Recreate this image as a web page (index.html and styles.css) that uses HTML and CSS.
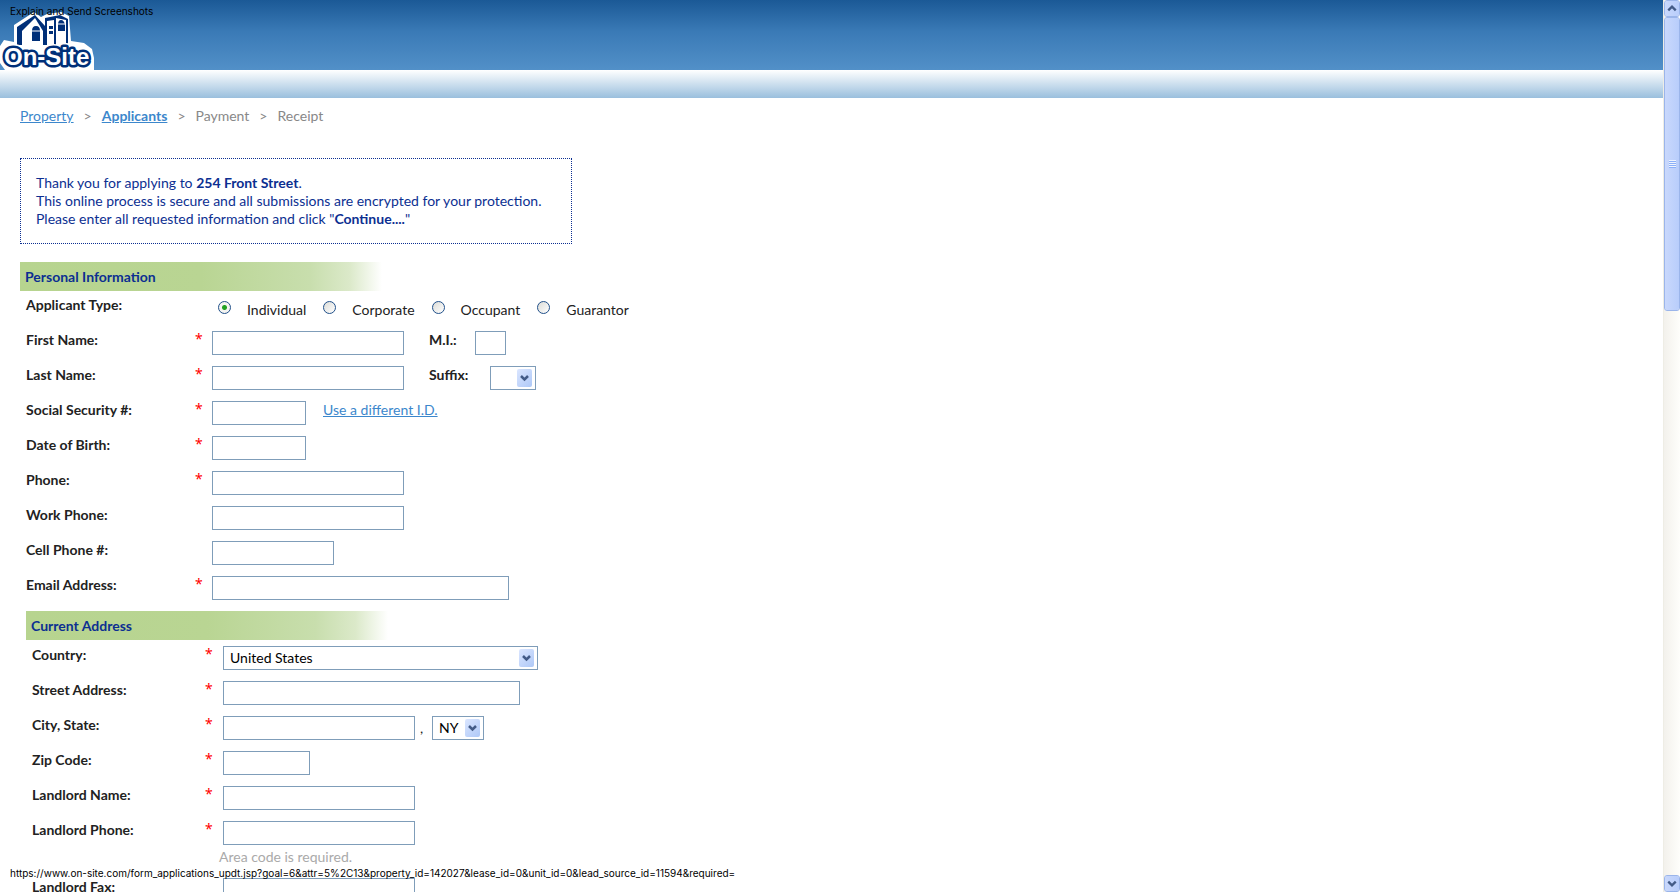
FILE: index.html
```html
<!DOCTYPE html>
<html lang="en">
<head>
<meta charset="utf-8">
<title>On-Site Application</title>
<link rel="stylesheet" href="styles.css">
</head>
<body>
<div class="page">
  <header class="banner">
    <svg class="logo" width="94" height="70" viewBox="0 0 94 70" role="img" aria-label="On-Site">
      <path fill="#fff" d="M14 42V25L34 12 41 17 47 14 61 12 69 16 71 41 84 43 92 49 94 58V70H5L0 63V46L4 40Z"/>
      <path fill="#002f78" d="M17 27 35 15 45 26V18L60 15 68 19V45H17Z"/>
      <path fill="#fff" d="M22 31 35 18 43 31V45H22Z"/>
      <path fill="#fff" d="M47 21 54 20V45H47ZM56 18 66 20V45H56Z"/>
      <path fill="#002f78" d="M32 31Q32 26 36 26T40 31V41H32ZM49 26H53V29H49ZM49 31H53V34H49ZM58 25Q58 20 61 20T65 25V31H58Z"/>
      <path stroke="#fff" d="M32 31H40M58 24H65"/>
      <text class="logo-halo" x="4" y="65">On-Site</text>
      <text class="logo-text" x="4" y="65">On-Site</text>
    </svg>
  </header>
  <div class="subbanner"></div>
  <nav class="crumbs" aria-label="Progress">
    <a href="#">Property</a><span>&gt;</span><a class="current" href="#">Applicants</a><span>&gt;</span><span>Payment</span><span>&gt;</span><span>Receipt</span>
  </nav>
  <form class="content">
    <p class="notice">Thank you for applying to <b>254 Front Street</b>.<br>This online process is secure and all submissions are encrypted for your protection.<br>Please enter all requested information and click "<b>Continue....</b>"</p>

    <section class="section">
      <h2>Personal Information</h2>
      <div class="row" role="radiogroup" aria-labelledby="type">
        <span class="label" id="type">Applicant Type:</span><span class="star"></span>
        <div class="radios">
          <label><input type="radio" name="type" checked><span>Individual</span></label>
          <label><input type="radio" name="type"><span>Corporate</span></label>
          <label><input type="radio" name="type"><span>Occupant</span></label>
          <label><input type="radio" name="type"><span>Guarantor</span></label>
        </div>
      </div>
      <div class="row"><label class="label" for="first">First Name:</label><span class="star">*</span><input id="first" class="field w-name"><label class="side mi" for="mi">M.I.:</label><input id="mi" class="field w-mi"></div>
      <div class="row"><label class="label" for="last">Last Name:</label><span class="star">*</span><input id="last" class="field w-name"><label class="side suffix" for="suffix">Suffix:</label><span class="select w-suffix"><select id="suffix"><option></option><option>Jr.</option></select><svg viewBox="0 0 15 18"><path d="M4 7l3.500 3.500L11 7"/></svg></span></div>
      <div class="row"><label class="label" for="ssn">Social Security #:</label><span class="star">*</span><input id="ssn" class="field w-short"><a class="alt-id" href="#">Use a different I.D.</a></div>
      <div class="row"><label class="label" for="dob">Date of Birth:</label><span class="star">*</span><input id="dob" class="field w-short"></div>
      <div class="row"><label class="label" for="phone">Phone:</label><span class="star">*</span><input id="phone" class="field w-name"></div>
      <div class="row"><label class="label" for="work">Work Phone:</label><span class="star"></span><input id="work" class="field w-name"></div>
      <div class="row"><label class="label" for="cell">Cell Phone #:</label><span class="star"></span><input id="cell" class="field w-cell"></div>
      <div class="row"><label class="label" for="email">Email Address:</label><span class="star">*</span><input id="email" class="field w-long"></div>
    </section>

    <section class="section nested">
      <h2>Current Address</h2>
      <div class="row"><label class="label" for="country">Country:</label><span class="star">*</span><span class="select w-country"><select id="country"><option>United States</option></select><svg viewBox="0 0 15 18"><path d="M4 7l3.500 3.500L11 7"/></svg></span></div>
      <div class="row"><label class="label" for="street">Street Address:</label><span class="star">*</span><input id="street" class="field w-long"></div>
      <div class="row"><label class="label" for="city">City, State:</label><span class="star">*</span><input id="city" class="field w-name"><span class="comma">,</span><span class="select w-state"><select id="state" aria-label="State"><option>NY</option></select><svg viewBox="0 0 15 18"><path d="M4 7l3.500 3.500L11 7"/></svg></span></div>
      <div class="row"><label class="label" for="zip">Zip Code:</label><span class="star">*</span><input id="zip" class="field w-zip"></div>
      <div class="row"><label class="label" for="lname">Landlord Name:</label><span class="star">*</span><input id="lname" class="field w-name"></div>
      <div class="row"><label class="label" for="lphone">Landlord Phone:</label><span class="star">*</span><input id="lphone" class="field w-name"></div>
      <p class="hint">Area code is required.</p>
      <div class="row"><label class="label" for="lfax">Landlord Fax:</label><span class="star"></span><input id="lfax" class="field w-name"></div>
    </section>
  </form>
</div>
<div class="scrollbar" aria-hidden="true">
  <span class="sb-button"><svg viewBox="0 0 15 15"><path d="M3.500 9.500l4-4 4 4"/></svg></span>
  <span class="sb-thumb"><i></i></span>
  <span class="sb-button sb-down"><svg viewBox="0 0 15 15"><path d="M3.500 5.500l4 4 4-4"/></svg></span>
</div>
<div class="overlay overlay-top">Explain and Send Screenshots</div>
<div class="overlay overlay-bottom">https://www.on-site.com/form_applications_updt.jsp?goal=6&amp;attr=5%2C13&amp;property_id=142027&amp;lease_id=0&amp;unit_id=0&amp;lead_source_id=11594&amp;required=</div>
</body>
</html>
```
FILE: styles.css
```css
* { box-sizing: border-box; }
body {
  margin: 0;
  height: 100vh;
  overflow: hidden;
  display: flex;
  position: relative;
  background: #fff;
  color: #222;
  font: 14px/18px Lato, "Open Sans", sans-serif;
}
.page { flex: 1; min-width: 0; overflow: hidden; }
.banner { height: 70px; background: linear-gradient(#1b5996, #3a7ab6 45%, #5290c8); }
.logo { display: block; }
.logo text { font: bold 24px "Liberation Sans", sans-serif; stroke-linejoin: round; paint-order: stroke; }
.logo-halo { fill: #fff; stroke: #fff; stroke-width: 8px; }
.logo-text { fill: #fff; stroke: #002f78; stroke-width: 5px; }
.subbanner { height: 28px; background: linear-gradient(#fff, #9abfdd); }
.crumbs { display: flex; gap: 10px; padding: 9px 20px 0; color: #888; }
a { color: #3c87cc; }
.current { font-weight: bold; }
.content { padding: 33px 20px 0; }
.notice {
  width: 552px;
  margin: 0 0 18px;
  padding: 15px;
  border: 1px dotted #0c2f91;
  color: #0c2f91;
}
h2 {
  width: 362px;
  height: 29px;
  margin: 0;
  padding: 0 5px;
  font-size: 14px;
  line-height: 29px;
  color: #0c2f91;
  background: linear-gradient(90deg, #b7d48f, #b9d593 50%, #c8dead 80%, #dbe9c9 91%, #fff);
}
.row { display: flex; align-items: flex-start; min-height: 35px; padding: 5px 0 6px 6px; }
.label { width: 169px; font-weight: bold; }
.star { width: 17px; color: #f00; font: 14px/16px "Noto Sans", sans-serif; }
.field { height: 24px; border: 1px solid #7f9db9; padding: 0 6px; font: inherit; background: #fff; }
.w-name { width: 192px; }
.w-mi { width: 31px; }
.w-short { width: 94px; }
.w-cell { width: 122px; }
.w-long { width: 297px; }
.w-zip { width: 87px; }
.w-suffix { width: 46px; }
.w-country { width: 315px; }
.w-state { width: 52px; }
.side { margin-left: 25px; font-weight: bold; }
.mi { width: 46px; }
.suffix { width: 61px; }
.alt-id { margin-left: 17px; }
.comma { width: 17px; padding: 3px 0 0 5px; }
.select { position: relative; height: 24px; }
.select select {
  appearance: none;
  width: 100%;
  height: 24px;
  padding: 0 6px;
  border: 1px solid #7f9db9;
  border-radius: 0;
  background: #fff;
  color: #000;
  font: inherit;
}
.select svg {
  position: absolute;
  top: 3px;
  right: 4px;
  width: 15px;
  height: 18px;
  border-radius: 2px;
  background: linear-gradient(135deg, #dbe6ff, #aec8f7);
  pointer-events: none;
}
.select path, .scrollbar path { fill: none; stroke: #435b87; stroke-width: 2.5px; }
.radios { display: flex; gap: 17px; padding-left: 6px; }
.radios label { display: flex; gap: 16px; }
.radios label span { padding-top: 5px; }
.radios input {
  appearance: none;
  width: 13px;
  height: 13px;
  margin: 5px 0 0;
  border: 1px solid #21508a;
  border-radius: 50%;
  background: linear-gradient(135deg, #dcdcd7, #fff);
}
.radios input:checked { background: radial-gradient(circle, #21a121 0 2px, #f4f4f1 3px); }
.nested { padding: 5px 0 0 6px; }
.nested .star { width: 18px; }
.nested .label { width: 173px; }
.nested h2 { margin-bottom: 1px; }
.hint { margin: -6px 0 5px 193px; padding: 3px 0 2px; color: #aaa; }

.scrollbar {
  width: 17px;
  display: flex;
  flex-direction: column;
  border-left: 1px solid #eeede5;
  background: linear-gradient(90deg, #f3f1ec, #fefefb);
}
.sb-button, .sb-thumb {
  display: flex;
  align-items: center;
  justify-content: center;
  border: 1px solid #fff;
  border-radius: 3px;
  outline: 1px solid #9bb5ea;
  outline-offset: -1px;
  background: linear-gradient(90deg, #c9d8fc, #b8cdfb);
}
.sb-button { height: 17px; }
.sb-button svg { width: 15px; height: 15px; }
.sb-thumb { height: 294px; }
.sb-thumb i { width: 7px; height: 8px; background: repeating-linear-gradient(#eef4fe 0 1px, #8cb0f8 1px 2px); }
.sb-down { margin-top: auto; }

.overlay { position: absolute; left: 10px; color: #000; font: 10px/12px Inter, "Liberation Sans", sans-serif; }
.overlay-top { top: 5px; }
.overlay-bottom { bottom: 13px; }
```
